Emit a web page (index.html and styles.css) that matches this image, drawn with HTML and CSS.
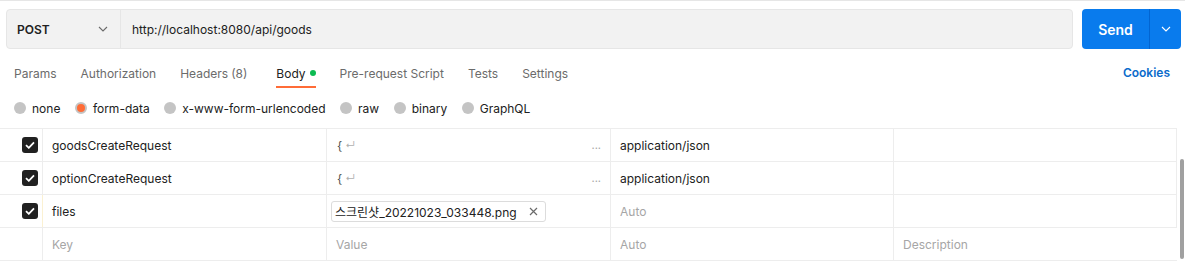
FILE: index.html
```html
<!DOCTYPE html>
<html lang="ko">
<head>
    <meta charset="UTF-8">
    <title>POST http://localhost:8080/api/goods</title>
    <link rel="stylesheet" href="styles.css">
</head>
<body>

    <div class="request-bar">
        <div class="url-box">
            <div class="method">
                <span>POST</span>
                <svg class="chev" width="10" height="6" viewBox="0 0 10 6"><path d="M1 1l4 4 4-4" fill="none" stroke="#6b6b6b" stroke-width="1.1"/></svg>
            </div>
            <div class="url">http://localhost:8080/api/goods</div>
        </div>
        <div class="send">
            <span class="send-label">Send</span>
            <span class="send-more">
                <svg width="10" height="6" viewBox="0 0 10 6"><path d="M1 1l4 4 4-4" fill="none" stroke="#fff" stroke-width="1.1"/></svg>
            </span>
        </div>
    </div>

    <div class="tabs">
        <a class="tab">Params</a>
        <a class="tab">Authorization</a>
        <a class="tab">Headers <span class="count">(8)</span></a>
        <a class="tab active">Body <span class="dot"></span></a>
        <a class="tab">Pre-request Script</a>
        <a class="tab">Tests</a>
        <a class="tab">Settings</a>
        <a class="cookies">Cookies</a>
    </div>

    <div class="body-types">
        <label class="radio"><span class="circle"></span>none</label>
        <label class="radio"><span class="circle checked"></span>form-data</label>
        <label class="radio"><span class="circle"></span>x-www-form-urlencoded</label>
        <label class="radio"><span class="circle"></span>raw</label>
        <label class="radio"><span class="circle"></span>binary</label>
        <label class="radio"><span class="circle"></span>GraphQL</label>
    </div>

    <div class="table-wrap">
        <div class="kv-table">
            <div class="row">
                <div class="cell check"><span class="box">
                    <svg width="10" height="8" viewBox="0 0 10 8"><path d="M1 4.2l2.8 2.6L9 1.3" fill="none" stroke="#fff" stroke-width="1.8"/></svg>
                </span></div>
                <div class="cell">goodsCreateRequest</div>
                <div class="cell value"><span class="brace">{</span><span class="ret">↵</span><span class="more">...</span></div>
                <div class="cell">application/json</div>
                <div class="cell"></div>
            </div>
            <div class="row">
                <div class="cell check"><span class="box">
                    <svg width="10" height="8" viewBox="0 0 10 8"><path d="M1 4.2l2.8 2.6L9 1.3" fill="none" stroke="#fff" stroke-width="1.8"/></svg>
                </span></div>
                <div class="cell">optionCreateRequest</div>
                <div class="cell value"><span class="brace">{</span><span class="ret">↵</span><span class="more">...</span></div>
                <div class="cell">application/json</div>
                <div class="cell"></div>
            </div>
            <div class="row">
                <div class="cell check"><span class="box">
                    <svg width="10" height="8" viewBox="0 0 10 8"><path d="M1 4.2l2.8 2.6L9 1.3" fill="none" stroke="#fff" stroke-width="1.8"/></svg>
                </span></div>
                <div class="cell key-file">files</div>
                <div class="cell value">
                    <span class="file-chip">스크린샷_20221023_033448.png
                        <svg width="9" height="9" viewBox="0 0 9 9"><path d="M1 1l7 7M8 1L1 8" stroke="#6b6b6b" stroke-width="1.2"/></svg>
                    </span>
                </div>
                <div class="cell muted">Auto</div>
                <div class="cell"></div>
            </div>
            <div class="row last">
                <div class="cell check"></div>
                <div class="cell muted">Key</div>
                <div class="cell muted">Value</div>
                <div class="cell muted">Auto</div>
                <div class="cell muted">Description</div>
            </div>
        </div>
        <div class="scrollbar"></div>
    </div>

</body>
</html>
```

FILE: styles.css
```css
body {
    font-family: Inter, "Noto Sans CJK KR", sans-serif;
    font-size: 12px;
    color: #212121;
    background-color: #fff;
    margin: 0;
    padding: 0;
    border-top: 1px solid #e6e6e6;
    width: 1185px;
    overflow: hidden;
}

/* 请求栏 */
.request-bar {
    display: flex;
    gap: 9px;
    padding: 8px 4px 0 6px;
}

    .url-box {
        flex: 1;
        display: flex;
        height: 38px;
        background: #f2f2f2;
        border: 1px solid #e6e6e6;
        border-radius: 4px;
    }

        .method {
            width: 114px;
            display: flex;
            align-items: center;
            justify-content: space-between;
            padding: 0 12px 0 10px;
            box-sizing: border-box;
            border-right: 1px solid #e6e6e6;
            font-weight: 600;
        }

        .url {
            display: flex;
            align-items: center;
            padding-left: 11px;
        }

    .send {
        width: 99px;
        height: 40px;
        display: flex;
        background: #097bed;
        border-radius: 4px;
        color: #fff;
    }

        .send-label {
            flex: 1;
            display: flex;
            align-items: center;
            justify-content: center;
            font-size: 14px;
            font-weight: 600;
            border-right: 1px solid #0265d2;
        }

        .send-more {
            width: 31px;
            display: flex;
            align-items: center;
            justify-content: center;
        }

/* 标签页 */
.tabs {
    display: flex;
    align-items: center;
    gap: 24px;
    height: 32px;
    margin-top: 8px;
    padding: 0 14px;
}

    .tab {
        position: relative;
        height: 32px;
        display: flex;
        align-items: center;
        color: #6b6b6b;
    }

        .tab .count {
            margin-left: 3px;
            margin-right: 5px;
        }

        .tab.active {
            color: #212121;
        }

            .tab.active::after {
                content: "";
                position: absolute;
                left: 0;
                right: 0;
                bottom: 1px;
                height: 2px;
                background: #ff6c37;
            }

        .dot {
            width: 6px;
            height: 6px;
            border-radius: 50%;
            background: #0cbb52;
            margin-left: 4px;
        }

    .cookies {
        margin-left: auto;
        margin-right: 1px;
        margin-top: -2px;
        color: #0b6bcb;
        font-weight: 600;
    }

/* 请求体类型 */
.body-types {
    display: flex;
    align-items: center;
    gap: 14.5px;
    height: 38px;
    padding: 0 14px 1px;
    color: #212121;
}

    .radio {
        display: flex;
        align-items: center;
        gap: 6px;
    }

        .circle {
            width: 12px;
            height: 12px;
            border-radius: 50%;
            background: #c4c4c4;
            box-sizing: border-box;
        }

            .circle.checked {
                background: #ff6c37;
                border: 2px solid #c4c4c4;
            }

/* 表格 */
.table-wrap {
    position: relative;
    padding-right: 8px;
}

.kv-table {
    border-top: 1px solid #ededed;
}

    .row {
        display: grid;
        grid-template-columns: 42px 284px 284px 283px 284px;
        height: 33px;
        border-bottom: 1px solid #ededed;
        box-sizing: border-box;
    }

        .row:not(.last) {
            border-right: 1px solid #ededed;
        }

    .cell {
        display: flex;
        align-items: center;
        padding: 0 9px;
        border-left: 1px solid #ededed;
        white-space: nowrap;
        overflow: hidden;
    }

        .cell.check {
            border-left: none;
            justify-content: flex-end;
            padding: 0 4px 0 0;
        }

        .cell.muted {
            color: #a6a6a6;
        }

        .cell.key-file {
            border-left-color: #fbf1d2;
        }

    .box {
        width: 16px;
        height: 16px;
        border-radius: 3px;
        background: #212121;
        display: flex;
        align-items: center;
        justify-content: center;
    }

    .value .brace {
        color: #505050;
        margin-left: 1px;
    }

    .value .ret {
        color: #b0b0b0;
        font-size: 10px;
        margin-left: 3px;
    }

    .value .more {
        margin-left: auto;
        color: #a6a6a6;
        font-size: 11px;
    }

    .file-chip {
        display: flex;
        align-items: center;
        gap: 12px;
        height: 19px;
        padding: 0 7px 0 3px;
        margin-left: -5px;
        border: 1px solid #dcdcdc;
        border-radius: 3px;
    }

.scrollbar {
    position: absolute;
    right: 1px;
    top: 31px;
    width: 4px;
    height: 100px;
    border-radius: 2px;
    background: #a0a0a0;
}
```
